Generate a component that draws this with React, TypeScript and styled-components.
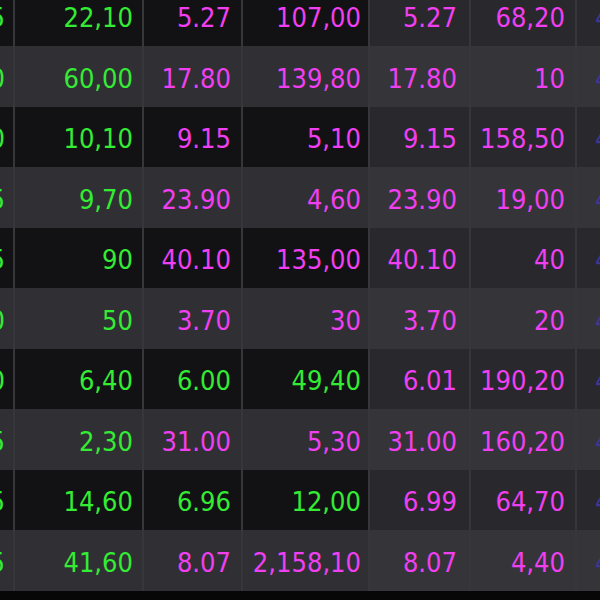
import styled, { createGlobalStyle } from "styled-components";

type Tone = "g" | "m";
type Cell = [string, Tone];

const GlobalStyle = createGlobalStyle`
  html, body {
    margin: 0;
    padding: 0;
    background: #070708;
    overflow: hidden;
  }
`;

const rows: Cell[][] = [
  [["1,025", "g"], ["22,10", "g"], ["5.27", "m"], ["107,00", "m"], ["5.27", "m"], ["68,20", "m"]],
  [["3,470", "g"], ["60,00", "g"], ["17.80", "m"], ["139,80", "m"], ["17.80", "m"], ["10", "m"]],
  [["2,110", "g"], ["10,10", "g"], ["9.15", "m"], ["5,10", "m"], ["9.15", "m"], ["158,50", "m"]],
  [["4,085", "g"], ["9,70", "g"], ["23.90", "m"], ["4,60", "m"], ["23.90", "m"], ["19,00", "m"]],
  [["1,935", "g"], ["90", "g"], ["40.10", "m"], ["135,00", "m"], ["40.10", "m"], ["40", "m"]],
  [["6,220", "g"], ["50", "g"], ["3.70", "m"], ["30", "m"], ["3.70", "m"], ["20", "m"]],
  [["5,810", "g"], ["6,40", "g"], ["6.00", "g"], ["49,40", "g"], ["6.01", "m"], ["190,20", "m"]],
  [["2,765", "g"], ["2,30", "g"], ["31.00", "m"], ["5,30", "m"], ["31.00", "m"], ["160,20", "m"]],
  [["8,145", "g"], ["14,60", "g"], ["6.96", "g"], ["12,00", "g"], ["6.99", "m"], ["64,70", "m"]],
  [["3,305", "g"], ["41,60", "g"], ["8.07", "m"], ["2,158,10", "m"], ["8.07", "m"], ["4,40", "m"]],
];

// the grid is wider than the window on purpose: the screenshot is a crop of a bigger board
const Board = styled.div`
  display: grid;
  grid-template-columns: 60px 127px 97px 125px 99px 104px 60px;
  grid-auto-rows: 60.5px;
  column-gap: 2px;
  width: max-content;
  margin: -14.5px 0 0 -47px;
  background: #37373b;
  font-family: "DejaVu Sans Condensed", "Liberation Sans", sans-serif;
  font-stretch: condensed;
  font-size: 27px;
`;

const Td = styled.div<{ $light: boolean; $side: boolean; $tone: Tone; $pad: number }>`
  display: flex;
  align-items: center;
  justify-content: flex-end;
  padding: 4px ${(p) => p.$pad}px 0 0;
  overflow: hidden;
  white-space: nowrap;
  color: ${(p) => (p.$tone === "g" ? "#34ec34" : "#f03ff0")};
  background: ${(p) =>
    p.$light ? (p.$side ? "#343439" : "#2f2f34") : p.$side ? "#28282d" : "#121214"};
`;

const Edge = styled(Td)`
  justify-content: flex-start;
  padding-left: 18px;
  color: #3f3798;
`;

const pads = [8, 9, 10, 7, 12, 10];

export default function App() {
  return (
    <>
      <GlobalStyle />
      <Board>
        {rows.map((row, r) => {
          const light = r % 2 === 1;
          return [
            ...row.map(([v, tone], c) => (
              <Td key={`${r}-${c}`} $light={light} $side={c >= 4} $tone={tone} $pad={pads[c]}>
                {v}
              </Td>
            )),
            <Edge key={`${r}-e`} $light={light} $side $tone="m" $pad={0}>
              4
            </Edge>,
          ];
        })}
      </Board>
    </>
  );
}
